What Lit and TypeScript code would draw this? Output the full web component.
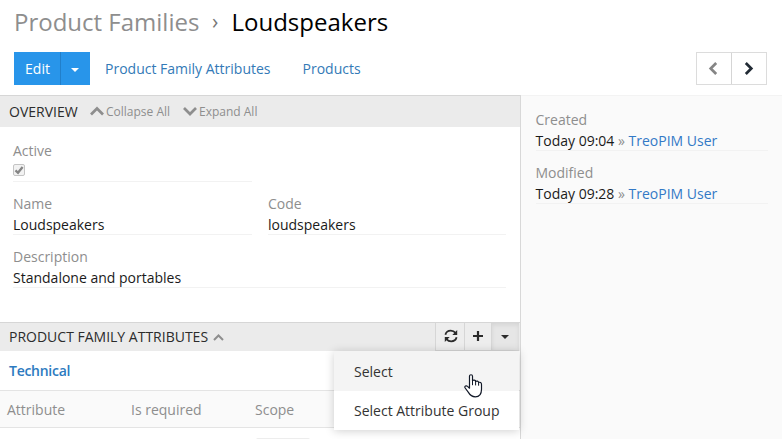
import { LitElement, html, css, svg } from "lit";
import { customElement, property } from "lit/decorators.js";

const chevron = (d: string, size: [number, number], width: number) => html`
  <svg width=${size[0]} height=${size[1]} viewBox="0 0 ${size[0]} ${size[1]}">
    ${svg`<path d=${d} fill="none" stroke="currentColor" stroke-width=${width} />`}
  </svg>`;

@customElement("record-field")
class RecordField extends LitElement {
  @property() label = "";

  static styles = css`
    :host { display: block; height: 53px; }
    .label { color: #8e8e8e; line-height: 20px; height: 21px; }
    .value { box-sizing: border-box; color: #1a1a1a; line-height: 20px; height: var(--value-height, 20px); border-bottom: 1px solid #f2f2f2; white-space: nowrap; }
  `;

  render() {
    return html`<div class="label">${this.label}</div><div class="value"><slot></slot></div>`;
  }
}

@customElement("app-root")
class AppRoot extends LitElement {
  static styles = css`
    :host { display: flex; flex-direction: column; height: 439px; overflow: hidden; background: #fff;
      font: 14px/20px "Open Sans", "Noto Sans", sans-serif; color: #333; position: relative; }
    * { box-sizing: border-box; }
    svg { display: block; flex: none; }
    .title { height: 52px; padding: 5px 0 0 14px; font-size: 24px; line-height: 33px; color: #000; white-space: nowrap; display: flex; }
    .parent { color: #8e8e8e; width: 198px; }
    .sep { color: #777; width: 19.5px; font-size: 21px; }
    .toolbar { height: 43px; padding: 0 15px 0 14px; display: flex; align-items: flex-start; }
    .btn { height: 33px; background: #2895ea; color: #fff; display: flex; align-items: center; justify-content: center; }
    .edit { width: 47px; border-right: 1px solid #217fca; padding-left: 1px; }
    .drop { width: 29px; padding: 2px 1px 0 0; }
    .caret { width: 0; height: 0; border: 4px solid transparent; border-top-color: currentColor; border-bottom: 0; }
    .link { color: #337ab7; line-height: 33px; white-space: nowrap; }
    .nav1 { margin-left: 15px; width: 197.5px; }
    .pager { margin-left: auto; display: flex; border: 1px solid #dcdcdc; height: 33px; width: 71px; }
    .page { flex: 1; display: flex; align-items: center; justify-content: center; color: #222b35; padding-bottom: 1px; }
    .page.off { color: #858585; border-right: 1px solid #d5d5d5; flex: 0 0 35px; padding-right: 2px; }
    .body { display: flex; flex: 1; min-height: 0; }
    .main { width: 521px; border-right: 1px solid #d8d8d8; }
    .side { flex: 1; background: #fafafa; border-top: 1px solid #f3f3f3; padding: 14px 14px 0 14.5px; }
    .bar { background: #ebebeb; border-top: 1px solid #d6d6d6; display: flex; align-items: center; color: #2c2c2c; padding-left: 9px; white-space: nowrap; }
    .overview { height: 32px; }
    .overview .name { width: 81px; }
    .tool { display: flex; align-items: center; color: #8e8e8e; font-size: 12px; gap: 2px; width: 93px; }
    .fields { height: 195px; padding: 14px 14px 0 13px; display: grid; grid-template-columns: 239px 238px; column-gap: 16px; grid-auto-rows: 53px; }
    .active { --value-height: 18px; }
    .wide { grid-column: 1 / 3; }
    .check { width: 12px; height: 12px; border: 1px solid #c4c4c4; border-radius: 2px; background: #f2f2f2; color: #858585; margin-top: 2px; }
    .attrs { height: 29px; gap: 5px; color: #2c2c2c; }
    .attrs .up { color: #8e8e8e; }
    .actions { margin-left: auto; display: flex; align-self: flex-start; height: 28px; padding-right: 1px; }
    .act { border-left: 1px solid #d6d6d6; border-bottom: 1px solid #d6d6d6; display: flex; align-items: center; justify-content: center; background: #ededed; color: #2b2b2b; }
    .refresh { width: 29px; padding: 0 0 2px 1px; }
    .plus { width: 27px; padding-bottom: 2px; }
    .more { width: 28px; background: #e6e6e6; box-shadow: inset 0 2px 4px rgba(0,0,0,.08); padding-right: 1px; }
    .group { height: 39px; padding: 0 9px; line-height: 40px; font-weight: 600; letter-spacing: -.27px; color: #2c7ac0; }
    .head { height: 38px; border: solid #e4e4e4; border-width: 1px 0; background: #fafafa; color: #8e8e8e; padding-left: 7px; line-height: 37px; display: grid; grid-template-columns: 124px 124px auto; }
    .pill { margin: 10px 0 0 256px; width: 54px; height: 12px; border-radius: 2px; background: #ededed; }
    .menu { position: absolute; left: 334px; top: 351px; width: 185px; height: 79px; background: #fff; box-shadow: 0 1px 9px rgba(0,0,0,.19); color: #333; }
    .item { height: 39px; line-height: 40px; padding-left: 20px; white-space: nowrap; }
    .item.hover { background: #f4f4f4; height: 40px; line-height: 41px; }
    .hand { position: absolute; left: 464px; top: 374px; }
    .user { color: #3379c6; }
    .arrows { color: #8e8e8e; }
  `;

  render() {
    return html`
      <div class="title"><span class="parent">Product Families</span><span class="sep">›</span><span>Loudspeakers</span></div>
      <div class="toolbar">
        <div class="btn edit">Edit</div>
        <div class="btn drop"><i class="caret"></i></div>
        <span class="link nav1">Product Family Attributes</span>
        <span class="link">Products</span>
        <div class="pager">
          <div class="page off">${chevron("M8.2 2L2.7 7.5L8.2 13", [10, 15], 2.7)}</div>
          <div class="page">${chevron("M1.8 2L7.3 7.5L1.8 13", [10, 15], 2.7)}</div>
        </div>
      </div>
      <div class="body">
        <div class="main">
          <div class="bar overview">
            <span class="name">OVERVIEW</span>
            <span class="tool">${chevron("M1 8.5L7 2.5L13 8.5", [14, 12], 2.7)}Collapse All</span>
            <span class="tool">${chevron("M1 2L7 8L13 2", [14, 12], 2.7)}Expand All</span>
          </div>
          <div class="fields">
            <record-field class="active" label="Active">
              <div class="check"><svg width="10" height="10" viewBox="0 0 10 10"><path d="M1.5 5.4L4 7.8L8.6 2" fill="none" stroke="currentColor" stroke-width="2.3" /></svg></div>
            </record-field><span></span>
            <record-field label="Name">Loudspeakers</record-field>
            <record-field label="Code">loudspeakers</record-field>
            <record-field class="wide" label="Description">Standalone and portables</record-field>
          </div>
          <div class="bar attrs">
            <span>PRODUCT FAMILY ATTRIBUTES</span>
            <span class="up">${chevron("M1 8L5.5 3.5L10 8", [11, 10], 2)}</span>
            <div class="actions">
              <div class="act refresh"><svg width="14" height="14" viewBox="0 0 14 14" fill="none" stroke="currentColor" stroke-width="1.8"><path d="M1.4 5.7C2.1 3 4.3 1.7 6.8 1.7C8.8 1.7 10.3 2.5 11.5 3.9M12.6 8.3C11.9 11 9.7 12.3 7.2 12.3C5.2 12.3 3.7 11.5 2.5 10.1" /><path d="M13.2 1v4.9H8.3zM.8 13V8.1h4.9z" fill="currentColor" stroke="none" /></svg></div>
              <div class="act plus"><svg width="12" height="12" viewBox="0 0 12 12"><path d="M6 1v10M1 6h10" stroke="currentColor" stroke-width="2.2" /></svg></div>
              <div class="act more"><i class="caret"></i></div>
            </div>
          </div>
          <div class="group">Technical</div>
          <div class="head"><span>Attribute</span><span>Is required</span><span>Scope</span></div>
          <div class="pill"></div>
        </div>
        <div class="side">
          <record-field label="Created">Today 09:04 <span class="arrows">»</span> <span class="user">TreoPIM User</span></record-field>
          <record-field label="Modified">Today 09:28 <span class="arrows">»</span> <span class="user">TreoPIM User</span></record-field>
        </div>
      </div>
      <div class="menu">
        <div class="item hover">Select</div>
        <div class="item">Select Attribute Group</div>
      </div>
      <svg class="hand" width="19" height="24" viewBox="0 0 19 24"><path d="M5.5 14.2V2.3C5.5.2 8.5.2 8.5 2.3V6.8C9.2 5.7 11.5 6 11.6 7.4C12.7 6.7 14.4 7.1 14.6 8.5C16 7.8 17.5 8.6 17.5 10.4V15.2C17.5 20 15.4 22.8 11.3 22.8C7.5 22.8 6 21.2 4.4 18.4L1.2 14C.1 12.3 2.2 11 3.5 12.4Z" fill="#fff" stroke="#111827" stroke-width="1.2" stroke-linejoin="round" /><path d="M8.5 6.8v4.4M11.6 7.4v4M14.6 8.5v3.2" stroke="#111827" stroke-width="1" /></svg>
    `;
  }
}
